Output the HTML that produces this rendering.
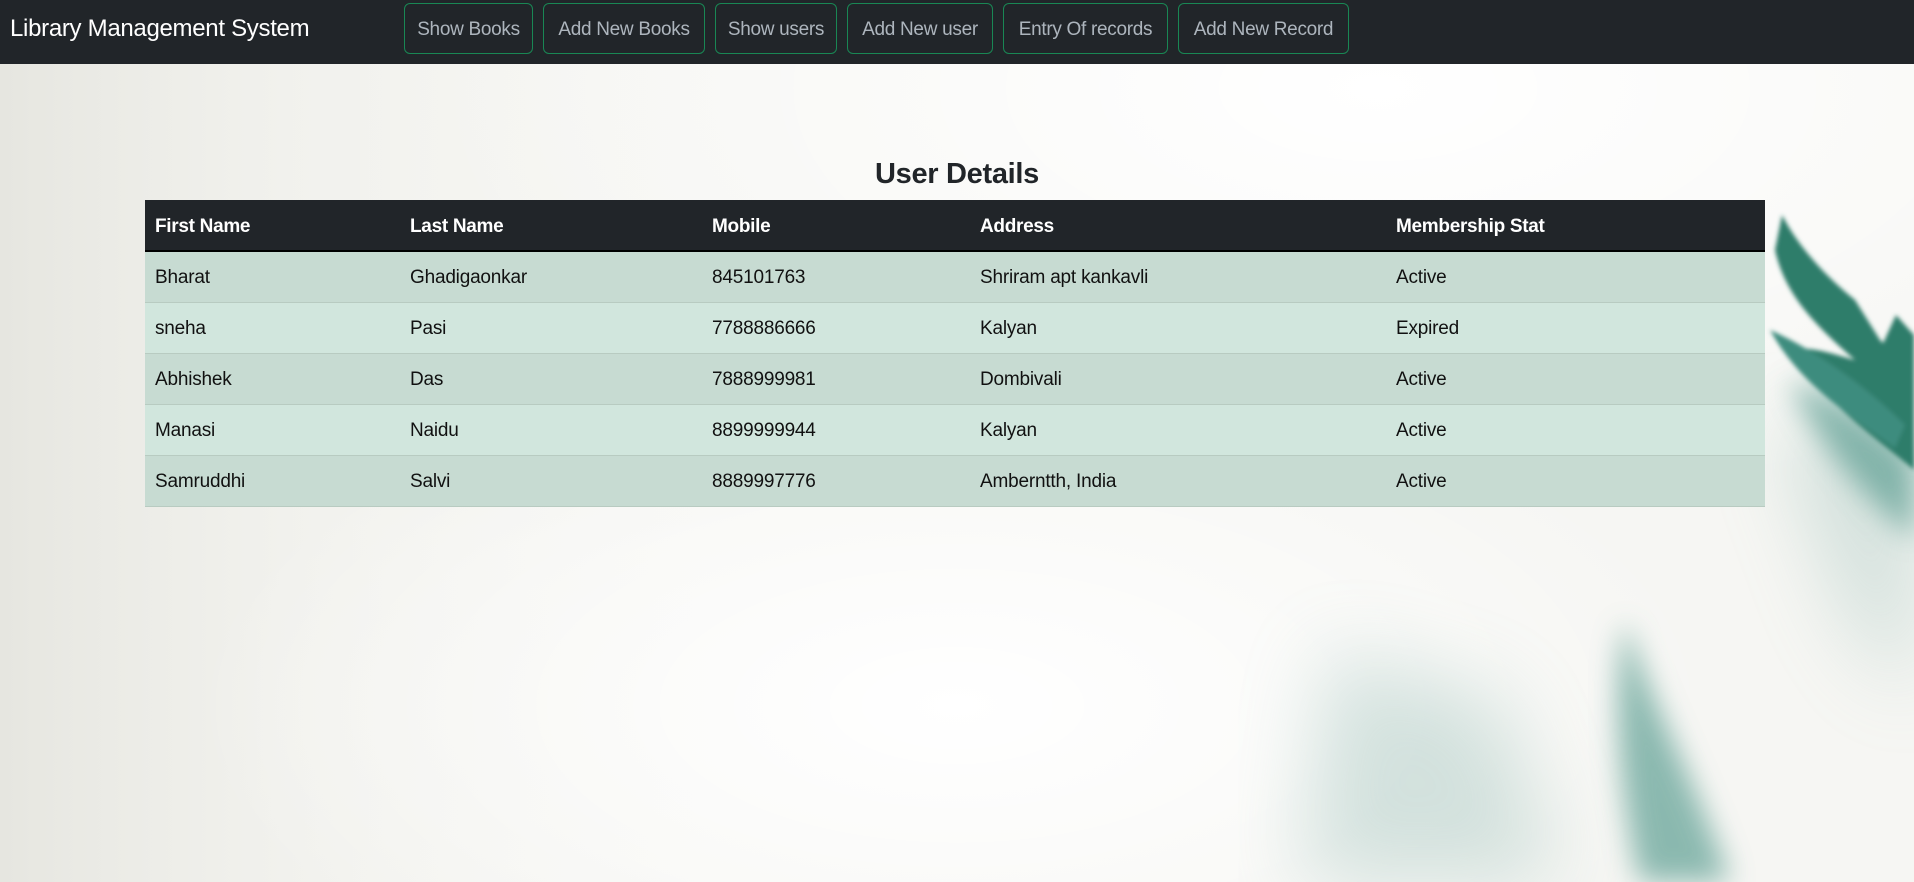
<!DOCTYPE html>
<html><head><meta charset="utf-8"><style>
*{box-sizing:border-box;margin:0;padding:0}
html,body{width:1914px;height:882px;overflow:hidden}
body{font-family:"Liberation Sans",sans-serif;position:relative;background:#f6f6f3;}
.bg{position:absolute;left:0;top:0;width:1914px;height:882px;z-index:0}
nav{position:absolute;left:0;top:0;width:1914px;height:64px;background:#212529;z-index:2}
.brand{position:absolute;left:10px;top:15px;color:#fff;font-size:24px;letter-spacing:-0.3px}
.btn{position:absolute;top:3px;height:51px;border:1px solid #198754;border-radius:6px;color:#adb5bd;font-size:19px;display:flex;align-items:center;justify-content:center;letter-spacing:-0.3px;padding-top:2px}
h2{position:absolute;left:0;width:1914px;text-align:center;top:158px;font-size:29px;font-weight:bold;color:#212529;z-index:2;letter-spacing:-0.3px}
table{position:absolute;left:145px;top:200px;width:1620px;border-collapse:collapse;z-index:2;font-size:19px;color:#111}
th{background:#212529;color:#fff;text-align:left;height:51px;padding:3px 0 0 10px;border-bottom:2px solid #000;font-weight:bold;letter-spacing:-0.3px}
td{height:51px;padding:3px 0 0 10px;border-bottom:1px solid #b8cbc1;letter-spacing:-0.2px}
tbody tr:nth-child(odd) td{background:#c7dbd2}
tbody tr:nth-child(even) td{background:#d1e6dd}
</style></head><body>
<svg class="bg" viewBox="0 0 1914 882">
<defs>
<filter id="b1"><feGaussianBlur stdDeviation="2"/></filter>
<filter id="b2"><feGaussianBlur stdDeviation="14"/></filter>
<filter id="b3"><feGaussianBlur stdDeviation="40"/></filter>
<radialGradient id="w" cx="0.72" cy="0.1" r="0.5"><stop offset="0" stop-color="#fff"/><stop offset="1" stop-color="#fff" stop-opacity="0"/></radialGradient>
<radialGradient id="w2" cx="0.5" cy="0.8" r="0.4"><stop offset="0" stop-color="#fff"/><stop offset="1" stop-color="#fff" stop-opacity="0"/></radialGradient>
<linearGradient id="l" x1="0" x2="1"><stop offset="0" stop-color="#e6e6e0"/><stop offset="0.15" stop-color="#eeeee9" stop-opacity="0.6"/><stop offset="0.4" stop-color="#f4f4f0" stop-opacity="0"/></linearGradient>
</defs>
<rect width="1914" height="882" fill="url(#l)"/>
<rect width="1914" height="882" fill="url(#w)"/>
<rect width="1914" height="882" fill="url(#w2)"/>
<g filter="url(#b3)" opacity="0.35" fill="#8bb5ad">
<path d="M1780 430 L1914 400 L1914 700 L1850 620 Z"/>
<path d="M1330 650 L1500 700 L1560 882 L1300 882 Z"/>
</g>
<g filter="url(#b2)" fill="#5d9f93" opacity="0.7">
<path d="M1625 620 C1650 700 1700 790 1730 882 L1640 882 C1620 800 1610 700 1625 620 Z"/>
<path d="M1790 380 C1850 400 1890 440 1914 460 L1914 540 C1870 500 1820 450 1790 380 Z"/>
</g>
<g filter="url(#b1)" fill="#2e7d6a">
<path d="M1782 215 C1800 250 1830 280 1855 300 L1880 340 C1900 360 1914 370 1914 370 L1914 470 C1880 440 1830 410 1792 350 C1810 345 1835 355 1855 360 C1815 325 1785 295 1775 250 Z"/>
<path d="M1880 350 L1896 315 L1914 335 L1914 410 Z"/>
<path d="M1770 330 C1815 350 1865 385 1905 425 L1895 448 C1850 415 1800 385 1770 330 Z" fill="#3d8c7e"/>
</g>
</svg>
<nav>
<div class="brand">Library Management System</div>
<div class="btn" style="left:404px;width:129px">Show Books</div>
<div class="btn" style="left:543px;width:162px">Add New Books</div>
<div class="btn" style="left:715px;width:122px">Show users</div>
<div class="btn" style="left:847px;width:146px">Add New user</div>
<div class="btn" style="left:1003px;width:165px">Entry Of records</div>
<div class="btn" style="left:1178px;width:171px">Add New Record</div>
</nav>
<h2>User Details</h2>
<table>
<colgroup><col style="width:255px"><col style="width:302px"><col style="width:268px"><col style="width:416px"><col></colgroup>
<thead><tr><th>First Name</th><th>Last Name</th><th>Mobile</th><th>Address</th><th>Membership Stat</th></tr></thead>
<tbody>
<tr><td>Bharat</td><td>Ghadigaonkar</td><td>845101763</td><td>Shriram apt kankavli</td><td>Active</td></tr>
<tr><td>sneha</td><td>Pasi</td><td>7788886666</td><td>Kalyan</td><td>Expired</td></tr>
<tr><td>Abhishek</td><td>Das</td><td>7888999981</td><td>Dombivali</td><td>Active</td></tr>
<tr><td>Manasi</td><td>Naidu</td><td>8899999944</td><td>Kalyan</td><td>Active</td></tr>
<tr><td>Samruddhi</td><td>Salvi</td><td>8889997776</td><td>Amberntth, India</td><td>Active</td></tr>
</tbody>
</table>
</body></html>
